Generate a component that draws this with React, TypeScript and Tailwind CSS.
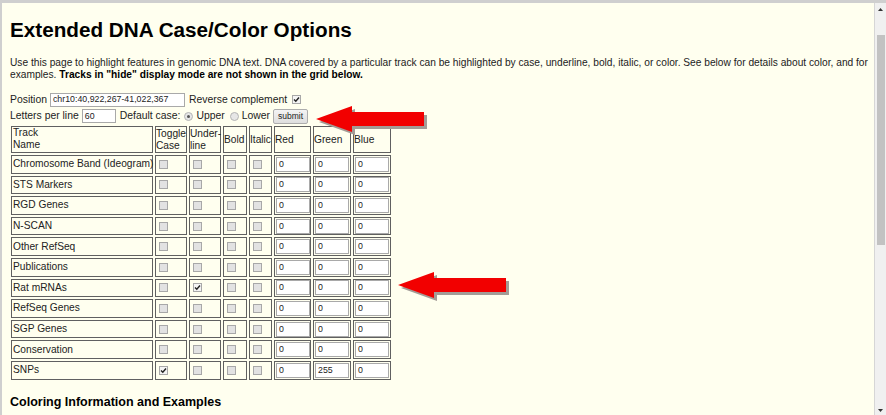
import React from 'react';

type Track = { name: string; toggle?: boolean; underline?: boolean; green?: string };

const tracks: Track[] = [
  { name: 'Chromosome Band (Ideogram)' },
  { name: 'STS Markers' },
  { name: 'RGD Genes' },
  { name: 'N-SCAN' },
  { name: 'Other RefSeq' },
  { name: 'Publications' },
  { name: 'Rat mRNAs', underline: true },
  { name: 'RefSeq Genes' },
  { name: 'SGP Genes' },
  { name: 'Conservation' },
  { name: 'SNPs', toggle: true, green: '255' },
];

function Check({ checked = false }: { checked?: boolean }) {
  return (
    <span
      className={`inline-flex items-center justify-center w-[9px] h-[9px] border border-[#a8a8a8] align-middle ${
        checked ? 'bg-[#f4f4f4]' : 'bg-[#e2e2e2]'
      }`}
    >
      {checked && (
        <svg width="7" height="7" viewBox="0 0 7 7">
          <path d="M1 3.5 L2.8 5.3 L6 1.5" stroke="#222" strokeWidth="1.4" fill="none" />
        </svg>
      )}
    </span>
  );
}

function Radio({ checked = false }: { checked?: boolean }) {
  return (
    <span className="inline-flex items-center justify-center w-[9px] h-[9px] rounded-full border border-[#b4b4b4] bg-[#e6e6e6]">
      {checked && <span className="w-[3px] h-[3px] rounded-full bg-[#555]" />}
    </span>
  );
}

function Box({ value, className = '' }: { value: string; className?: string }) {
  return (
    <span
      className={`inline-flex items-center bg-white border border-[#a9a9a9] pl-[2px] text-[8.8px] text-[#222] leading-none ${className}`}
    >
      {value}
    </span>
  );
}

function Arrow() {
  return (
    <svg width="114" height="32" viewBox="0 0 114 32">
      <polygon points="3,16 39,3 39,9 111,9 111,23 39,23 39,29" fill="#a39c96" />
      <polygon points="0,13 36,0 36,6 108,6 108,20 36,20 36,26" fill="#f20000" />
    </svg>
  );
}

export default function App() {
  const cell = 'border border-[#606060] px-[1px] align-middle';
  const head = 'border border-[#606060] px-0 align-middle text-left font-normal';
  return (
    <div
      className="relative w-[886px] h-[415px] overflow-hidden border-t-[3px] border-l-2 border-[#cfcfcf] flex text-[#222]"
      style={{ fontFamily: '"Liberation Sans", Arial, sans-serif' }}
    >
      <div className="flex-1 bg-[#ffffef] pl-[8px]">
        <h1 className="mt-[15px] text-[20.7px] font-bold text-black leading-[24px]">
          Extended DNA Case/Color Options
        </h1>
        <p className="mt-[15px] text-[10.2px] leading-[12px]">
          Use this page to highlight features in genomic DNA text. DNA covered by a particular track can be
          highlighted by case, underline, bold, italic, or color. See below for details about color, and for
          examples. <b className="text-black">Tracks in "hide" display mode are not shown in the grid below.</b>
        </p>

        <div className="mt-[11px] text-[10.4px] leading-[12px]">
          <div className="flex items-center h-[15px]">
            <span>Position</span>
            <Box value="chr10:40,922,267-41,022,367" className="ml-[3px] w-[135px] h-[14px]" />
            <span className="ml-[4px]">Reverse complement</span>
            <span className="ml-[5px] flex">
              <Check checked />
            </span>
          </div>
          <div className="flex items-center h-[16px] mt-[1px]">
            <span>Letters per line</span>
            <Box value="60" className="ml-[3px] w-[34px] h-[14px]" />
            <span className="ml-[4px]">Default case:</span>
            <span className="ml-[4px] flex">
              <Radio checked />
            </span>
            <span className="ml-[3px]">Upper</span>
            <span className="ml-[5px] flex">
              <Radio />
            </span>
            <span className="ml-[3px]">Lower</span>
            <span className="ml-[3px] inline-flex items-center justify-center w-[35px] h-[15px] border border-[#adadad] rounded-[2px] bg-gradient-to-b from-[#f4f4f4] to-[#dedede] text-[8.5px] text-[#222]">
              submit
            </span>
          </div>
        </div>

        <table className="-ml-[1px] border-separate border-spacing-[2px] table-fixed w-[384px] text-[10.2px] leading-[12px]">
          <thead>
            <tr>
              <th className={`${head} w-[142px] h-[27px] align-top pl-[1px]`}>
                Track
                <br />
                Name
              </th>
              <th className={`${head} w-[32px]`}>
                Toggle
                <br />
                Case
              </th>
              <th className={`${head} w-[32px]`}>
                Under-
                <br />
                line
              </th>
              <th className={`${head} w-[24px]`}>Bold</th>
              <th className={`${head} w-[23px]`}>Italic</th>
              <th className={`${head} w-[37px]`}>Red</th>
              <th className={`${head} w-[38px]`}>Green</th>
              <th className={`${head} w-[38px]`}>Blue</th>
            </tr>
          </thead>
          <tbody>
            {tracks.map((t) => (
              <tr key={t.name}>
                <td className={`${cell} h-[18.6px] whitespace-nowrap`}>{t.name}</td>
                <td className={cell}>
                  <span className="flex ml-[2px]">
                    <Check checked={t.toggle} />
                  </span>
                </td>
                <td className={cell}>
                  <span className="flex ml-[2px]">
                    <Check checked={t.underline} />
                  </span>
                </td>
                <td className={cell}>
                  <span className="flex ml-[2px]">
                    <Check />
                  </span>
                </td>
                <td className={cell}>
                  <span className="flex ml-[2px]">
                    <Check />
                  </span>
                </td>
                <td className={cell}>
                  <Box value="0" className="w-[34px] h-[15px] align-middle" />
                </td>
                <td className={cell}>
                  <Box value={t.green ?? '0'} className="w-[34px] h-[15px] align-middle" />
                </td>
                <td className={cell}>
                  <Box value="0" className="w-[34px] h-[15px] align-middle" />
                </td>
              </tr>
            ))}
          </tbody>
        </table>

        <h3 className="mt-[13px] text-[12.5px] font-bold text-black leading-[15px]">
          Coloring Information and Examples
        </h3>
      </div>

      {/* scrollbar */}
      <div className="w-[12px] bg-[#f0f0f0] border-l border-[#d6d6d6] flex flex-col items-center">
        <div className="h-[12px] flex items-center justify-center">
          <svg width="5" height="3" viewBox="0 0 5 3">
            <polygon points="2.5,0 5,3 0,3" fill="#333" />
          </svg>
        </div>
        <div className="mt-[20px] w-[8px] h-[210px] bg-[#c2c2c2]" />
        <div className="flex-1" />
        <div className="h-[10px] flex items-center justify-center">
          <svg width="5" height="3" viewBox="0 0 5 3">
            <polygon points="0,0 5,0 2.5,3" fill="#333" />
          </svg>
        </div>
      </div>

      {/* annotation arrows */}
      <div className="absolute left-[314px] top-[103px]">
        <Arrow />
      </div>
      <div className="absolute left-[396px] top-[269px]">
        <Arrow />
      </div>
    </div>
  );
}
